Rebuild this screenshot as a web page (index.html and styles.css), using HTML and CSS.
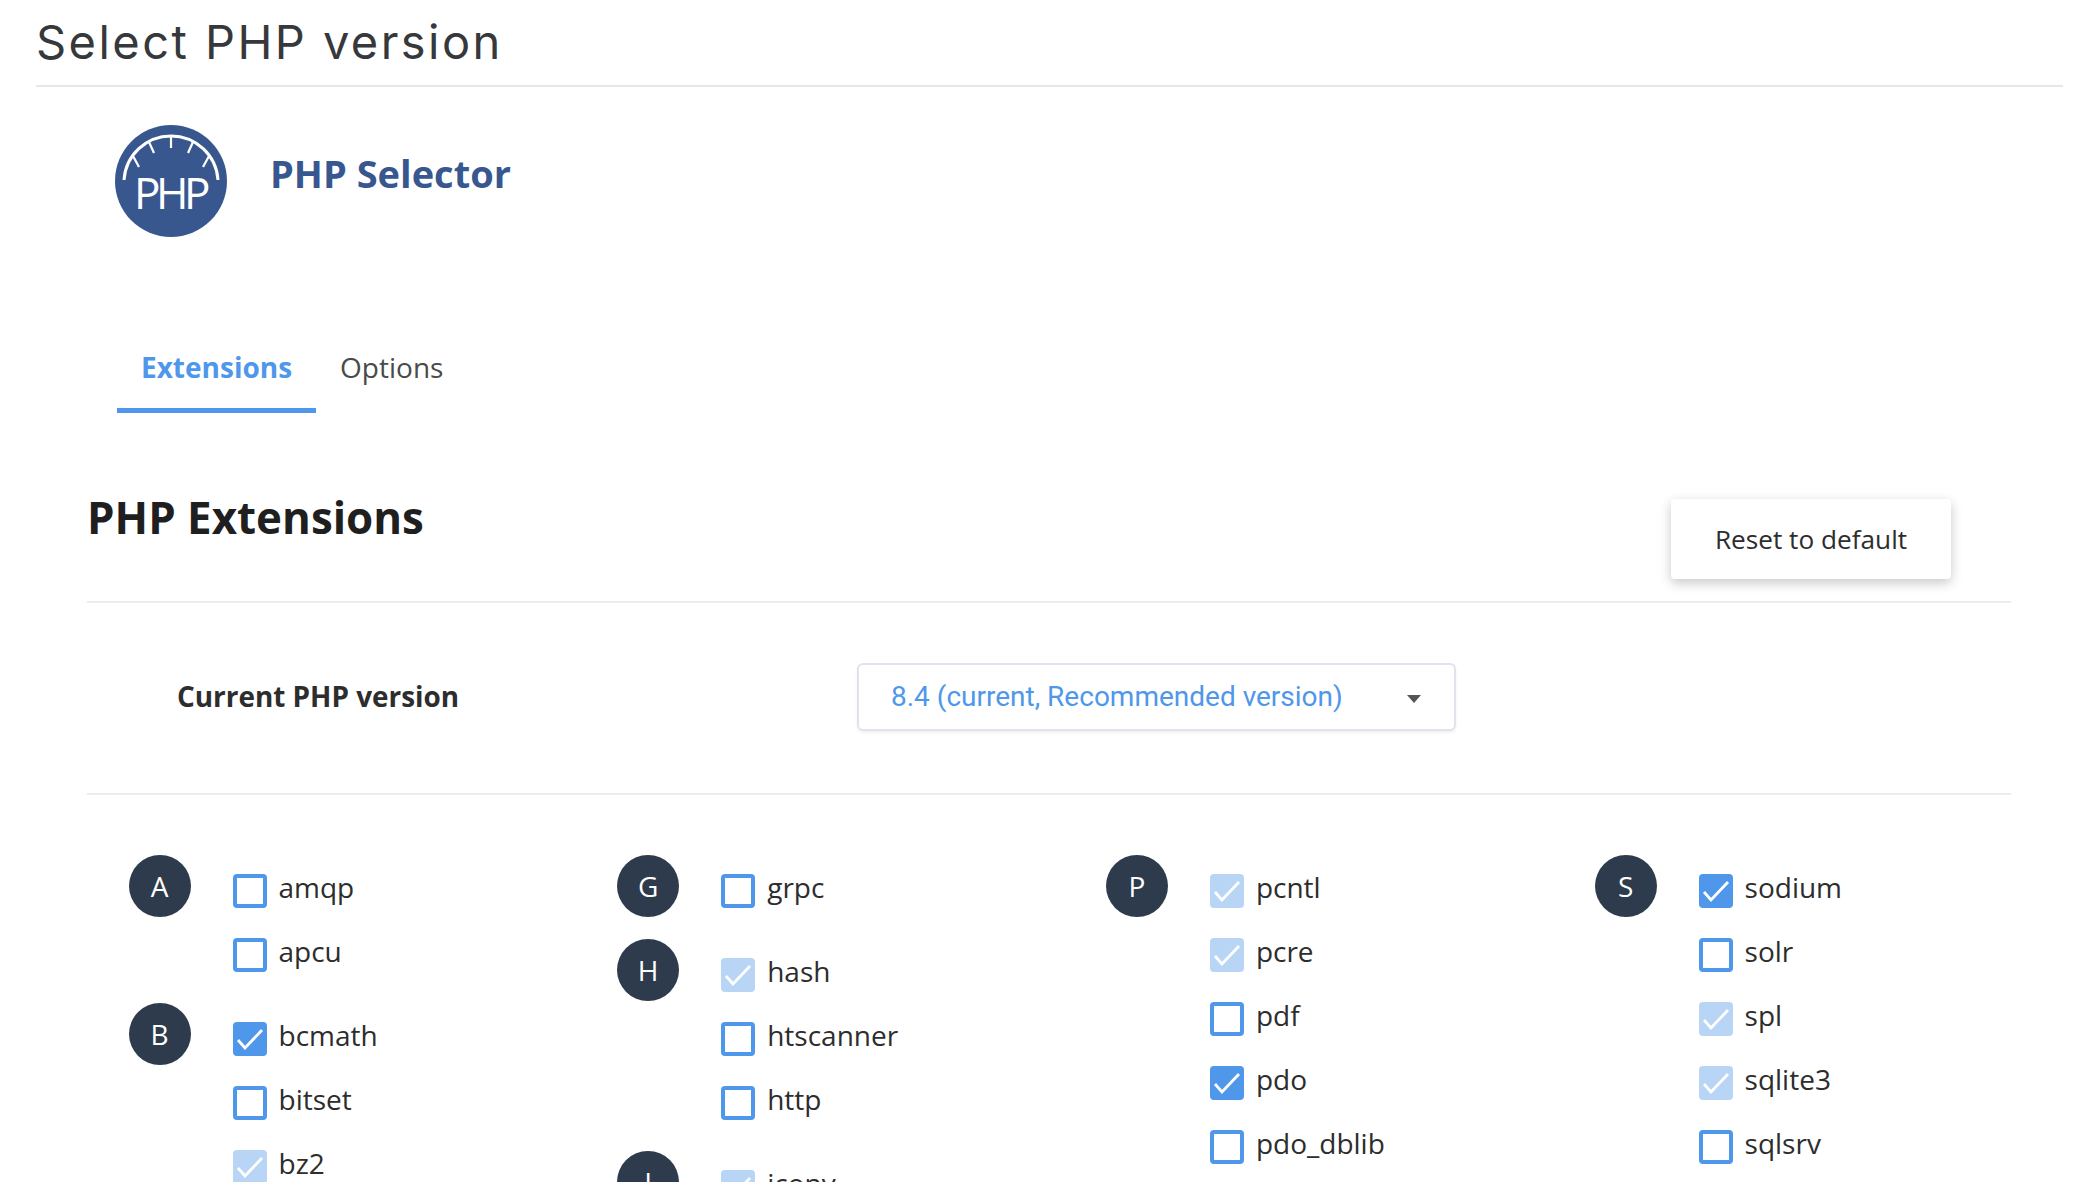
FILE: index.html
```html
<!DOCTYPE html>
<html lang="en">
<head>
<meta charset="utf-8">
<title>Select PHP version</title>
<link rel="stylesheet" href="styles.css">
</head>
<body>
<div class="page">
  <h1 class="page-title">Select PHP version</h1>
  <div class="content">
    <header class="brand">
      <svg class="logo" viewBox="0 0 112 112" width="112" height="112" aria-hidden="true">
        <circle cx="56" cy="56" r="56" fill="#38578f"/>
        <path d="M9 55 A47.100 47.100 0 0 1 103 55" fill="none" stroke="#fff" stroke-width="3"/>
        <g stroke="#fff" stroke-width="2.200" fill="none">
          <path d="M56 11V23"/>
          <path d="M34 17L39 28"/>
          <path d="M78 17L73 28"/>
          <path d="M18 31L24 42"/>
          <path d="M94 31L88 42"/>
        </g>
        <text class="logo-text" x="55" y="84" text-anchor="middle">PHP</text>
      </svg>
      <div class="brand-name">PHP Selector</div>
    </header>
    <nav class="tabs">
      <a class="tab tab-active">Extensions</a>
      <a class="tab">Options</a>
    </nav>
    <section class="panel">
      <div class="panel-head">
        <h2 class="panel-title">PHP Extensions</h2>
        <button class="btn">Reset to default</button>
      </div>
      <div class="version-row">
        <div class="version-label">Current PHP version</div>
        <div class="select">
          <span>8.4 (current, Recommended version)</span>
          <i class="caret"></i>
        </div>
      </div>
      <div class="ext-grid">
        <div class="ext-col">
          <div class="group"><div class="letter">A</div><ul class="items">
            <li class="item"><span class="cb"></span>amqp</li>
            <li class="item"><span class="cb"></span>apcu</li>
          </ul></div>
          <div class="group"><div class="letter">B</div><ul class="items">
            <li class="item"><span class="cb on"><svg viewBox="0 0 34 34"><path d="M5 18l7 8L29 8"/></svg></span>bcmath</li>
            <li class="item"><span class="cb"></span>bitset</li>
            <li class="item"><span class="cb dis"><svg viewBox="0 0 34 34"><path d="M5 18l7 8L29 8"/></svg></span>bz2</li>
          </ul></div>
        </div>
        <div class="ext-col">
          <div class="group"><div class="letter">G</div><ul class="items">
            <li class="item"><span class="cb"></span>grpc</li>
          </ul></div>
          <div class="group"><div class="letter">H</div><ul class="items">
            <li class="item"><span class="cb dis"><svg viewBox="0 0 34 34"><path d="M5 18l7 8L29 8"/></svg></span>hash</li>
            <li class="item"><span class="cb"></span>htscanner</li>
            <li class="item"><span class="cb"></span>http</li>
          </ul></div>
          <div class="group"><div class="letter">I</div><ul class="items">
            <li class="item"><span class="cb dis"><svg viewBox="0 0 34 34"><path d="M5 18l7 8L29 8"/></svg></span>iconv</li>
          </ul></div>
        </div>
        <div class="ext-col">
          <div class="group"><div class="letter">P</div><ul class="items">
            <li class="item"><span class="cb dis"><svg viewBox="0 0 34 34"><path d="M5 18l7 8L29 8"/></svg></span>pcntl</li>
            <li class="item"><span class="cb dis"><svg viewBox="0 0 34 34"><path d="M5 18l7 8L29 8"/></svg></span>pcre</li>
            <li class="item"><span class="cb"></span>pdf</li>
            <li class="item"><span class="cb on"><svg viewBox="0 0 34 34"><path d="M5 18l7 8L29 8"/></svg></span>pdo</li>
            <li class="item"><span class="cb"></span>pdo_dblib</li>
          </ul></div>
        </div>
        <div class="ext-col">
          <div class="group"><div class="letter">S</div><ul class="items">
            <li class="item"><span class="cb on"><svg viewBox="0 0 34 34"><path d="M5 18l7 8L29 8"/></svg></span>sodium</li>
            <li class="item"><span class="cb"></span>solr</li>
            <li class="item"><span class="cb dis"><svg viewBox="0 0 34 34"><path d="M5 18l7 8L29 8"/></svg></span>spl</li>
            <li class="item"><span class="cb dis"><svg viewBox="0 0 34 34"><path d="M5 18l7 8L29 8"/></svg></span>sqlite3</li>
            <li class="item"><span class="cb"></span>sqlsrv</li>
          </ul></div>
        </div>
      </div>
    </section>
  </div>
</div>
</body>
</html>
```

FILE: styles.css
```css
* { box-sizing: border-box; }
html, body { margin: 0; height: 100%; overflow: hidden; background: #fff; }
body { font-family: "Open Sans", "Noto Sans", sans-serif; color: #2d2d2d; }
.page { padding: 0 37px 0 36px; }
.page-title {
  margin: 0;
  height: 87px;
  padding-top: 14px;
  border-bottom: 2px solid #e6e6ec;
  font-family: Inter, sans-serif;
  font-size: 47px;
  line-height: 56px;
  font-weight: 400;
  letter-spacing: 2.450px;
  color: #36383c;
}
.content { padding-left: 51px; width: 1975px; }
.brand { display: flex; padding: 38px 0 0 28px; height: 236px; }
.logo { flex: none; }
.logo-text { font-family: "Open Sans", sans-serif; font-size: 44px; font-weight: 500; fill: #fff; letter-spacing: -4.500px; }
.brand-name {
  margin: 23px 0 0 43px;
  font-size: 38px;
  line-height: 50px;
  font-weight: 700;
  color: #38578f;
}
.tabs { display: flex; padding-left: 30px; height: 90px; }
.tab {
  padding: 25px 24px 0;
  font-size: 28px;
  line-height: 38px;
  color: #4a4a4a;
}
.tab-active { color: #4f97ea; font-weight: 700; border-bottom: 5px solid #4f97ea; }
.panel-head {
  display: flex;
  justify-content: space-between;
  align-items: flex-start;
  height: 190px;
  padding: 74px 60px 0 0;
  border-bottom: 2px solid #ededf1;
}
.panel-title {
  margin: 0;
  font-size: 43.900px;
  line-height: 60px;
  font-weight: 700;
  color: #1f1f1f;
}
.btn {
  width: 280px;
  height: 80px;
  margin-top: 12px;
  border: 0;
  border-radius: 4px;
  background: #fff;
  box-shadow: 0 4px 12px rgba(0,0,0,.22);
  font: 400 26.200px "Open Sans", sans-serif;
  color: #2d2d2d;
}
.version-row {
  display: flex;
  align-items: center;
  height: 192px;
  padding: 0 0 2px 90px;
  border-bottom: 2px solid #ededf1;
}
.version-label { width: 680px; margin-bottom: 2px; font-size: 27.900px; font-weight: 700; color: #2d2d2d; }
.select {
  display: flex;
  justify-content: space-between;
  align-items: center;
  width: 599px;
  height: 68px;
  padding: 0 33px 2px 32px;
  border: 2px solid #e0e2ee;
  border-radius: 6px;
  box-shadow: 0 2px 3px rgba(0,0,0,.06);
  font-family: Roboto, sans-serif;
  font-size: 28px;
  color: #4f97ea;
}
.caret {
  width: 0;
  height: 0;
  border-left: 7px solid transparent;
  border-right: 7px solid transparent;
  border-top: 8px solid #555;
  margin-top: 6px;
}
.ext-grid {
  display: grid;
  grid-template-columns: repeat(4, 488.700px);
  padding: 60px 0 0 41.500px;
}
.group { display: flex; margin-bottom: 20px; }
.letter {
  flex: none;
  width: 62px;
  height: 62px;
  border-radius: 50%;
  background: #2d3b4c;
  color: #fff;
  font-size: 28px;
  line-height: 62px;
  text-align: center;
}
.items { list-style: none; margin: 0; padding: 0 0 0 42px; }
.item {
  display: flex;
  align-items: center;
  height: 64px;
  font-size: 28px;
  line-height: 64px;
  color: #2d2d2d;
}
.cb {
  flex: none;
  width: 34px;
  height: 34px;
  margin: 7px 12px 0 0;
  border: 4px solid #4f97ea;
  border-radius: 4px;
}
.cb svg { display: block; width: 34px; height: 34px; margin: -4px; fill: none; stroke: #fff; stroke-width: 2.800; }
.cb.on { background: #4f97ea; }
.cb.dis { background: #b9d5f6; border-color: #b9d5f6; }
```
